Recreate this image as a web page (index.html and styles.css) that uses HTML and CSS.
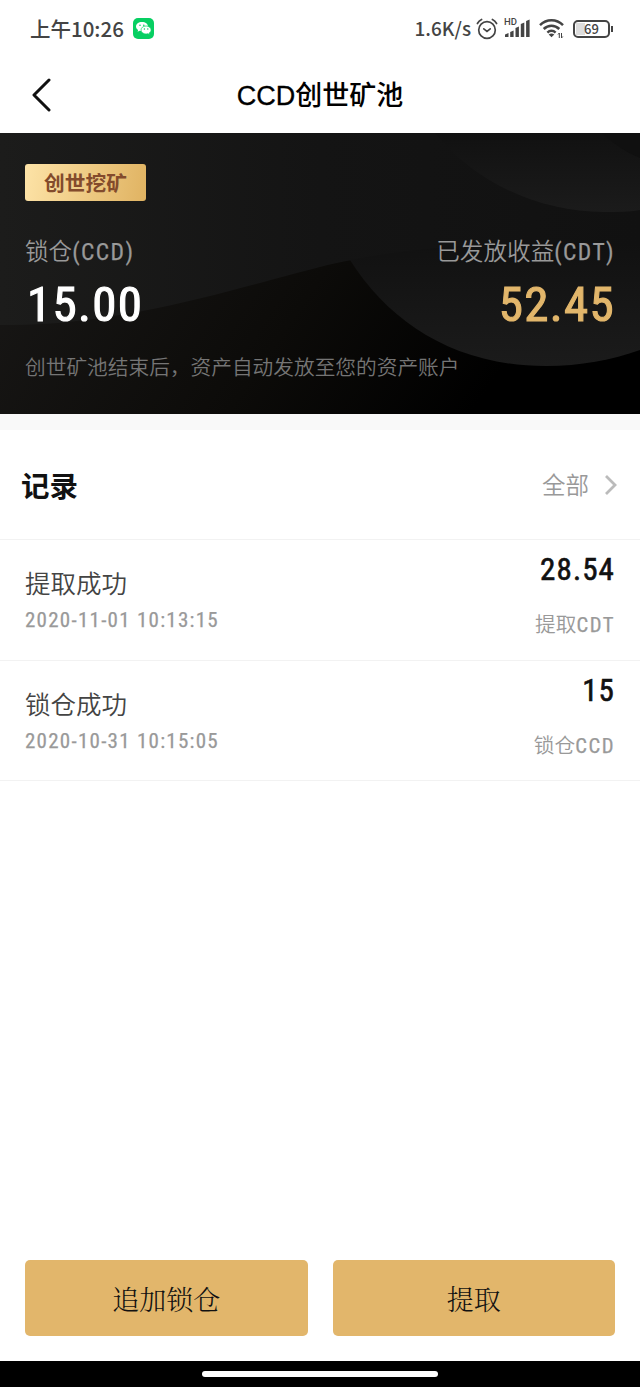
FILE: index.html
```
<!DOCTYPE html>
<html lang="zh-CN">
<head>
    <meta charset="utf-8">
    <title>CCD创世矿池</title>
    <link rel="stylesheet" href="styles.css">
</head>
<body>

<div class="app">

    <!-- STATUS BAR -->
    <div class="status">
        <span class="time">上午10:26</span>
        <svg class="wechat" width="21" height="21" viewBox="0 0 21 21">
            <rect width="21" height="21" rx="5" fill="#07cf62"/>
            <path d="M9 4C5.500 4 3 6 3 8.600c0 1.500.8 2.700 2.100 3.500l-.5 1.700 2-1c.8.200 1.500.3 2.400.3 3.500 0 6-2 6-4.500S12.500 4 9 4z" fill="#fff"/>
            <path d="M13.100 8c-3 0-5.100 1.800-5.100 4s2.200 4 5.100 4c.6 0 1.200-.1 1.700-.3l1.800.9-.4-1.500c1.200-.7 1.900-1.800 1.900-3.100 0-2.200-2.200-4-5-4z" fill="#fff" stroke="#07cf62" stroke-width=".7"/>
            <g fill="#07cf62"><circle cx="7" cy="7.200" r=".8"/><circle cx="10.800" cy="7.200" r=".8"/><circle cx="11.400" cy="11" r=".7"/><circle cx="14.800" cy="11" r=".7"/></g>
        </svg>
        <span class="speed">1.6K/s</span>
        <svg class="alarm" width="22" height="22" viewBox="0 0 22 22" fill="none" stroke="#444" stroke-width="1.700" stroke-linecap="round">
            <circle cx="11" cy="12" r="8.300"/>
            <path d="M7.800 10.800l3.200 2.500 3.200-2.500M1.400 5.500c1-1.800 2.400-3.200 4.200-4M20.600 5.500c-1-1.800-2.400-3.200-4.200-4"/>
        </svg>
        <span class="signal">
            <span class="hd">HD</span>
            <svg width="25" height="19" viewBox="0 0 25 19" fill="#444">
                <path d="M0 18v-2.500l3.500-1.500v4zM5.200 18v-5l3.400-1.500V18zM10.500 18V9l3.400-1.500V18zM15.800 18V5l3.500-1.500V18zM21.100 18V2l3.500-1.500V18z"/>
            </svg>
        </span>
        <svg class="wifi" width="25" height="21" viewBox="0 0 25 21" fill="none" stroke="#444" stroke-width="2.500">
            <path d="M1 7.200C7.500.6 17.500.6 24 7.200M4.700 11c4.500-4.500 11.100-4.500 15.600 0M8.400 14.600c2.400-2.400 5.800-2.400 8.200 0"/>
            <path d="M9.700 16.500q2.800-2 5.600 0l-2.800 2.800z" fill="#444" stroke="none"/>
            <path d="M20.300 20v-5l-1.300 1.500M22.500 15v5l1.300-1.500" stroke-width="1"/>
        </svg>
        <span class="battery"><span class="level">69</span></span>
    </div>

    <!-- NAV -->
    <div class="nav">
        <svg class="back" width="20" height="34" viewBox="0 0 20 34" fill="none" stroke="#111" stroke-width="3" stroke-linecap="round" stroke-linejoin="round">
            <path d="M17 2L2 17l15 15"/>
        </svg>
        <h1><span class="latin">CCD</span>创世矿池</h1>
    </div>

    <!-- HERO -->
    <div class="hero">
        <svg class="waves" width="640" height="281" viewBox="0 0 640 281">
            <defs>
                <linearGradient id="base" x1="0" y1="0" x2="1" y2=".3">
                    <stop offset="0" stop-color="#1b1a19"/>
                    <stop offset=".6" stop-color="#0c0b09"/>
                    <stop offset=".95" stop-color="#000"/>
                </linearGradient>
                <linearGradient id="hill" x1="0" y1="0" x2="1" y2="0">
                    <stop offset="0" stop-color="#1c1c1b"/>
                    <stop offset=".5" stop-color="#141414"/>
                    <stop offset="1" stop-color="#111"/>
                </linearGradient>
                <linearGradient id="disc" x1="0" y1="0" x2="0" y2="1">
                    <stop offset="0" stop-color="#111"/>
                    <stop offset="1" stop-color="#1b1b1b"/>
                </linearGradient>
            </defs>
            <rect width="640" height="281" fill="url(#base)"/>
            <path d="M0 0H640V130H352V127C341 129 330 131 320 134C240 154 120 194 0 192z" fill="url(#hill)"/>
            <path d="M350 127C390 190 455 233 546 233C580 233 612 227 640 217V112C560 108 450 108 350 127z" fill="url(#disc)"/>
            <path d="M435 0C475 50 540 79 604 79C617 79 629 79 640 77V0z" fill="url(#disc)"/>
            <path d="M602 0Q620 17 640 25V0z" fill="#101010"/>
        </svg>
        <div class="hero-body">
            <span class="badge">创世挖矿</span>
            <div class="stats">
                <div class="stat">
                    <p class="label">锁仓<span class="din">(CCD)</span></p>
                    <p class="value din">15.00</p>
                </div>
                <div class="stat right">
                    <p class="label">已发放收益<span class="din">(CDT)</span></p>
                    <p class="value gold din">52.45</p>
                </div>
            </div>
            <p class="note">创世矿池结束后，资产自动发放至您的资产账户</p>
        </div>
    </div>

    <!-- RECORDS -->
    <div class="records">
        <div class="records-head">
            <h2>记录</h2>
            <span class="all">全部</span>
            <svg width="14" height="22" viewBox="0 0 14 22" fill="none" stroke="#bbb" stroke-width="2.800">
                <path d="M2 2l9 9-9 9"/>
            </svg>
        </div>
        <div class="record">
            <div class="info">
                <p class="name">提取成功</p>
                <p class="date din">2020-11-01 10:13:15</p>
            </div>
            <div class="amount">
                <p class="num din">28.54</p>
                <p class="type">提取<span class="din">CDT</span></p>
            </div>
        </div>
        <div class="record">
            <div class="info">
                <p class="name">锁仓成功</p>
                <p class="date din">2020-10-31 10:15:05</p>
            </div>
            <div class="amount">
                <p class="num din">15</p>
                <p class="type">锁仓<span class="din">CCD</span></p>
            </div>
        </div>
    </div>

    <!-- ACTIONS -->
    <div class="actions">
        <button>追加锁仓</button>
        <button>提取</button>
    </div>

    <div class="homebar"><span></span></div>

</div>

</body>
</html>
```
FILE: styles.css
```
body {
    margin: 0;
    background: #fff;
    font-family: "Noto Sans CJK SC", sans-serif;
    font-weight: 350;
}

p, h1, h2 {
    margin: 0;
    white-space: nowrap;
}

.app {
    height: 1387px;
    display: flex;
    flex-direction: column;
}

.din {
    font-family: Roboto, sans-serif;
    font-stretch: 75%;
    font-weight: 400;
    -webkit-text-stroke: .25px currentColor;
}

/* status bar */
.status {
    height: 57px;
    padding: 0 30px;
    display: flex;
    align-items: center;
    color: #444;
    font-weight: 500;
    font-size: 20.5px;
}

.time,
.speed {
    position: relative;
    top: -1px;
}

.wechat {
    margin-left: 9px;
}

.speed {
    margin-left: auto;
    font-size: 19px;
}

.alarm {
    margin-left: 5px;
}

.signal {
    position: relative;
    height: 19px;
    margin-left: 7px;
}

.signal svg {
    display: block;
}

.hd {
    position: absolute;
    left: -1px;
    top: -2px;
    font: 500 9.500px/9px Roboto, sans-serif;
}

.wifi {
    margin-left: 9px;
}

.battery {
    position: relative;
    box-sizing: border-box;
    width: 37px;
    height: 18px;
    margin-left: 9px;
    padding: 1px;
    border: 2px solid #444;
    border-radius: 5px;
}

.battery::after {
    content: "";
    position: absolute;
    right: -5px;
    top: 4px;
    width: 2px;
    height: 6px;
    background: #444;
}

.level {
    display: block;
    background: linear-gradient(90deg, #ddd 30%, #fff 30%);
    font-size: 13px;
    line-height: 12px;
    text-align: center;
}

/* nav */
.nav {
    height: 76px;
    display: flex;
    align-items: center;
    justify-content: center;
    position: relative;
}

.back {
    position: absolute;
    left: 32px;
    top: 21px;
}

.nav h1 {
    margin-top: -1px;
    font-size: 27px;
    font-weight: 500;
    line-height: 40px;
    color: #000;
}

.latin {
    font-family: "Liberation Sans", sans-serif;
    font-weight: 400;
    -webkit-text-stroke: .3px #000;
}

/* hero */
.hero {
    position: relative;
    height: 281px;
    border-bottom: 16px solid #f9f9f9;
    background: #111;
}

.waves {
    position: absolute;
    left: 0;
    top: 0;
}

.hero-body {
    position: relative;
    padding: 31px 26px 0 25px;
}

.badge {
    display: block;
    width: 121px;
    height: 37px;
    border-radius: 3px;
    background: linear-gradient(100deg, #fde3a7, #e0b362);
    color: #834b2c;
    font-size: 20.700px;
    font-weight: 700;
    line-height: 37px;
    text-align: center;
}

.stats {
    display: flex;
    justify-content: space-between;
    margin-top: 32px;
}

.right {
    text-align: right;
}

.label {
    color: #999;
    font-size: 23.600px;
    line-height: 34px;
}

.label .din {
    letter-spacing: 1.400px;
    margin-right: -1px;
}

.value {
    margin: 6px -1px 0 2px;
    color: #fff;
    font-size: 49px;
    line-height: 60px;
    letter-spacing: 1.300px;
    -webkit-text-stroke-width: 1.100px;
}

.gold {
    color: #e2b66b;
}

.note {
    margin-top: 16px;
    color: #757575;
    font-size: 20.700px;
    line-height: 30px;
}

/* records */
.records-head {
    display: flex;
    align-items: center;
    height: 109px;
    padding: 0 22px 0 21px;
    border-bottom: 1px solid #f2f2f2;
}

.records-head h2 {
    flex: 1;
    font-size: 28.500px;
    font-weight: 700;
    color: #111;
}

.all {
    margin: -2px 15px 0 0;
    font-size: 23.500px;
    color: #999;
}

.record {
    box-sizing: border-box;
    height: 120.500px;
    padding: 0 26px 0 25px;
    display: flex;
    justify-content: space-between;
    border-bottom: 1px solid #f2f2f2;
}

.name {
    margin-top: 23px;
    color: #444;
    font-size: 25.500px;
    line-height: 38px;
}

.date {
    margin-top: 5px;
    color: #999;
    font-size: 21px;
    line-height: 28px;
    letter-spacing: 1.250px;
}

.amount {
    text-align: right;
}

.num {
    margin: 10px -1px 0 0;
    color: #111;
    font-size: 31px;
    line-height: 40px;
    letter-spacing: 1.100px;
    -webkit-text-stroke-width: .6px;
}

.type {
    margin-top: 18px;
    color: #999;
    font-size: 20.700px;
    line-height: 30px;
}

.type .din {
    letter-spacing: 1.500px;
    margin-right: -1px;
}

/* bottom */
.actions {
    display: flex;
    gap: 25px;
    margin-top: auto;
    padding: 0 25px 25px;
}

.actions button {
    flex: 1;
    height: 76px;
    padding: 0;
    border: none;
    border-radius: 5px;
    background: #e2b66b;
    color: #111;
    font-family: "Noto Serif CJK SC", "Noto Sans CJK SC", serif;
    font-size: 27px;
    font-weight: 300;
}

.homebar {
    height: 26px;
    background: #000;
    display: flex;
    align-items: center;
    justify-content: center;
}

.homebar span {
    width: 236px;
    height: 6px;
    border-radius: 3px;
    background: #fff;
}
```
